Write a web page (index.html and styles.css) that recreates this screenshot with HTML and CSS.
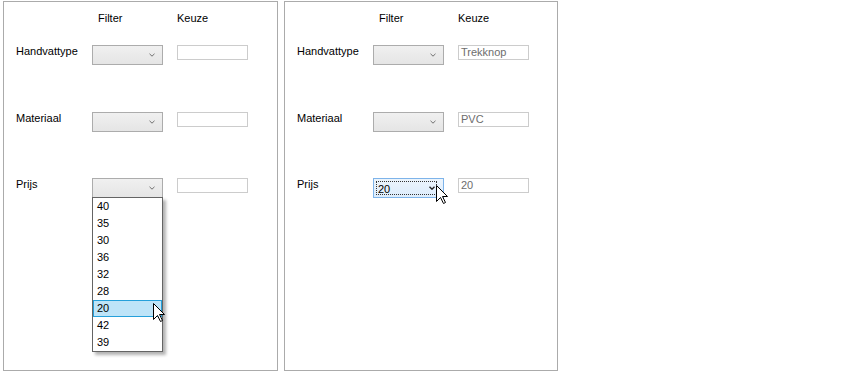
FILE: index.html
```html
<!DOCTYPE html>
<html lang="nl">
<head>
  <meta charset="UTF-8">
  <title>Filter</title>
  <link rel="stylesheet" href="styles.css">
</head>
<body>
  <div class="panels">
    <div class="panel">
      <div class="grid">
        <div></div>
        <div class="head head-filter">Filter</div>
        <div class="head">Keuze</div>

        <div class="label">Handvattype</div>
        <div class="combo">
          <span class="value"></span>
          <svg class="arrow" width="6" height="4" viewBox="0 0 6 4"><polyline points="0.5,0.8 3,3.2 5.5,0.8" /></svg>
        </div>
        <div class="textbox"></div>

        <div class="label">Materiaal</div>
        <div class="combo">
          <span class="value"></span>
          <svg class="arrow" width="6" height="4" viewBox="0 0 6 4"><polyline points="0.5,0.8 3,3.2 5.5,0.8" /></svg>
        </div>
        <div class="textbox"></div>

        <div class="label">Prijs</div>
        <div class="combo">
          <span class="value"></span>
          <svg class="arrow" width="6" height="4" viewBox="0 0 6 4"><polyline points="0.5,0.8 3,3.2 5.5,0.8" /></svg>
          <ul class="dropdown">
            <li>40</li>
            <li>35</li>
            <li>30</li>
            <li>36</li>
            <li>32</li>
            <li>28</li>
            <li class="hover">20
              <svg class="cursor cursor-list" width="13" height="20" viewBox="0 0 13 20"><path d="M0.5,0.5 L0.5,16.5 L4.5,12.5 L7.5,18.5 L9.5,17.5 L6.5,11.5 L11.5,11.5 Z" /></svg>
            </li>
            <li>42</li>
            <li>39</li>
          </ul>
        </div>
        <div class="textbox"></div>
      </div>
    </div>

    <div class="panel">
      <div class="grid">
        <div></div>
        <div class="head head-filter">Filter</div>
        <div class="head">Keuze</div>

        <div class="label">Handvattype</div>
        <div class="combo">
          <span class="value"></span>
          <svg class="arrow" width="6" height="4" viewBox="0 0 6 4"><polyline points="0.5,0.8 3,3.2 5.5,0.8" /></svg>
        </div>
        <div class="textbox">Trekknop</div>

        <div class="label">Materiaal</div>
        <div class="combo">
          <span class="value"></span>
          <svg class="arrow" width="6" height="4" viewBox="0 0 6 4"><polyline points="0.5,0.8 3,3.2 5.5,0.8" /></svg>
        </div>
        <div class="textbox">PVC</div>

        <div class="label">Prijs</div>
        <div class="combo focused">
          <span class="value">20</span>
          <svg class="arrow" width="6" height="4" viewBox="0 0 6 4"><polyline points="0.5,0.8 3,3.2 5.5,0.8" /></svg>
          <svg class="cursor cursor-combo" width="13" height="20" viewBox="0 0 13 20"><path d="M0.5,0.5 L0.5,16.5 L4.5,12.5 L7.5,18.5 L9.5,17.5 L6.5,11.5 L11.5,11.5 Z" /></svg>
        </div>
        <div class="textbox">20</div>
      </div>
    </div>
  </div>
</body>
</html>
```

FILE: styles.css
```css
* {
  margin: 0;
  padding: 0;
  box-sizing: border-box;
}

body {
  background: #fff;
  font-family: "Liberation Sans", Arial, sans-serif;
  font-size: 11px;
  line-height: 13px;
  color: #000;
}

.panels {
  display: flex;
  gap: 6px;
  padding: 1px 0 0 3px;
}

.panel {
  width: 275px;
  height: 370px;
  border: 1px solid #ababab;
}

.panel + .panel {
  width: 274px;
}

.grid {
  display: grid;
  grid-template-columns: 62px 71px 71px;
  grid-template-rows: 43px 67px 66px auto;
  column-gap: 14px;
  padding-left: 12px;
  align-items: start;
}

.head {
  padding-top: 10px;
}

.head-filter {
  padding-left: 6px;
}

.combo {
  position: relative;
  height: 20px;
  border: 1px solid #acacac;
  background: linear-gradient(#f0f0f0, #e5e5e5);
  display: flex;
  align-items: center;
  padding: 0 7px 0 2px;
}

.combo .value {
  flex: 1;
}

.arrow {
  display: block;
}

.arrow polyline {
  fill: none;
  stroke: #707070;
  stroke-width: 1;
}

.combo.focused {
  border-color: #7eb4ea;
  background: linear-gradient(#ecf4fc, #dcecfc);
  padding-right: 8px;
}

.combo.focused .value {
  align-self: stretch;
  margin: 2px 0 2px 0;
  padding-left: 1px;
  border: 1px dotted #333;
  line-height: 14px;
}

.combo.focused .arrow {
  margin-left: -8px;
}

.combo.focused .arrow polyline {
  stroke: #222;
  stroke-width: 1.4;
}

.textbox {
  height: 15px;
  border: 1px solid #cccccc;
  background: #fff;
  color: #6d6d6d;
  padding-left: 2px;
  line-height: 12px;
}

.dropdown {
  position: absolute;
  top: 18px;
  left: -1px;
  width: 71px;
  list-style: none;
  background: #fff;
  border: 1px solid #646464;
  box-shadow: 3px 3px 3px rgba(0, 0, 0, 0.3);
  z-index: 2;
}

.dropdown li {
  position: relative;
  height: 17px;
  line-height: 17px;
  padding-left: 4px;
}

.dropdown li.hover {
  background: #bee4f8;
  outline: 1px solid #26a0da;
  outline-offset: -1px;
}

.cursor {
  position: absolute;
  z-index: 3;
}

.cursor path {
  fill: #fff;
  stroke: #000;
  stroke-width: 1;
}

.cursor-list {
  left: 60px;
  top: 3px;
}

.cursor-combo {
  left: 62px;
  top: 6px;
}
```
